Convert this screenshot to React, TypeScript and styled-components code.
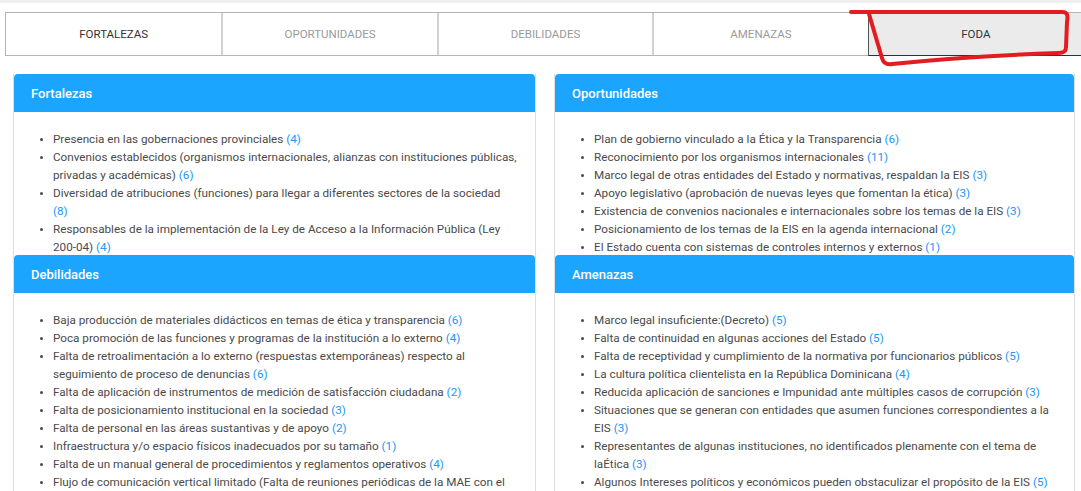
import React from "react";
import styled, { createGlobalStyle } from "styled-components";

type Item = { text: string; count: number };
type Panel = { title: string; items: Item[] };

const tabs = ["Fortalezas", "Oportunidades", "Debilidades", "Amenazas", "FODA"];

const panels: Panel[] = [
  {
    title: "Fortalezas",
    items: [
      { text: "Presencia en las gobernaciones provinciales", count: 4 },
      {
        text: "Convenios establecidos (organismos internacionales, alianzas con instituciones públicas, privadas y académicas)",
        count: 6,
      },
      { text: "Diversidad de atribuciones (funciones) para llegar a diferentes sectores de la sociedad", count: 8 },
      {
        text: "Responsables de la implementación de la Ley de Acceso a la Información Pública (Ley 200-04)",
        count: 4,
      },
    ],
  },
  {
    title: "Oportunidades",
    items: [
      { text: "Plan de gobierno vinculado a la Ética y la Transparencia", count: 6 },
      { text: "Reconocimiento por los organismos internacionales", count: 11 },
      { text: "Marco legal de otras entidades del Estado y normativas, respaldan la EIS", count: 3 },
      { text: "Apoyo legislativo (aprobación de nuevas leyes que fomentan la ética)", count: 3 },
      { text: "Existencia de convenios nacionales e internacionales sobre los temas de la EIS", count: 3 },
      { text: "Posicionamiento de los temas de la EIS en la agenda internacional", count: 2 },
      { text: "El Estado cuenta con sistemas de controles internos y externos", count: 1 },
    ],
  },
  {
    title: "Debilidades",
    items: [
      { text: "Baja producción de materiales didácticos en temas de ética y transparencia", count: 6 },
      { text: "Poca promoción de las funciones y programas de la institución a lo externo", count: 4 },
      {
        text: "Falta de retroalimentación a lo externo (respuestas extemporáneas) respecto al seguimiento de proceso de denuncias",
        count: 6,
      },
      { text: "Falta de aplicación de instrumentos de medición de satisfacción ciudadana", count: 2 },
      { text: "Falta de posicionamiento institucional en la sociedad", count: 3 },
      { text: "Falta de personal en las áreas sustantivas y de apoyo", count: 2 },
      { text: "Infraestructura y/o espacio físicos inadecuados por su tamaño", count: 1 },
      { text: "Falta de un manual general de procedimientos y reglamentos operativos", count: 4 },
      {
        text: "Flujo de comunicación vertical limitado (Falta de reuniones periódicas de la MAE con el personal)",
        count: 3,
      },
    ],
  },
  {
    title: "Amenazas",
    items: [
      { text: "Marco legal insuficiente:(Decreto)", count: 5 },
      { text: "Falta de continuidad en algunas acciones del Estado", count: 5 },
      { text: "Falta de receptividad y cumplimiento de la normativa por funcionarios públicos", count: 5 },
      { text: "La cultura política clientelista en la República Dominicana", count: 4 },
      { text: "Reducida aplicación de sanciones e Impunidad ante múltiples casos de corrupción", count: 3 },
      {
        text: "Situaciones que se generan con entidades que asumen funciones correspondientes a la EIS",
        count: 3,
      },
      {
        text: "Representantes de algunas instituciones, no identificados plenamente con el tema de laÉtica",
        count: 3,
      },
      { text: "Algunos Intereses políticos y económicos pueden obstaculizar el propósito de la EIS", count: 5 },
    ],
  },
];

const App = () => {
  return (
    <Page>
      <GlobalStyle />
      <TabBar>
        {tabs.map((t, i) => (
          <Tab key={t} $active={i === 4} $first={i === 0}>
            {t}
          </Tab>
        ))}
      </TabBar>

      <Grid>
        {panels.map((p) => (
          <Card key={p.title}>
            <CardHeader>{p.title}</CardHeader>
            <CardBody>
              <List>
                {p.items.map((it) => (
                  <li key={it.text}>
                    {it.text} <Count>({it.count})</Count>
                  </li>
                ))}
              </List>
            </CardBody>
          </Card>
        ))}
      </Grid>

      {/* hand-drawn highlight over the FODA tab */}
      <Scribble width="1081" height="80" viewBox="0 0 1081 80">
        <path
          d="M 851 12 L 1062 12 C 1068 12 1068 16 1067 22 L 1066 47 C 1066 52 1063 53 1058 53 C 1000 55 940 59 892 64 C 886 65 883 62 882 58 L 869 14"
          fill="none"
          stroke="#e41b1f"
          strokeWidth="4"
          strokeLinecap="round"
          strokeLinejoin="round"
        />
      </Scribble>
    </Page>
  );
};

const GlobalStyle = createGlobalStyle`
  html, body {
    margin: 0;
    padding: 0;
    background: #fff;
    overflow: hidden;
  }
  body {
    font-family: Roboto, "Liberation Sans", sans-serif;
  }
`;

const Page = styled.div`
  position: relative;
  width: 1081px;
  height: 491px;
  overflow: hidden;
  border-top: 3px solid #efefef;
  box-sizing: border-box;
`;

const TabBar = styled.nav`
  display: grid;
  grid-template-columns: repeat(5, 1fr);
  width: 1078px;
  height: 44px;
  margin: 9px 0 0 5px;
  border: 1px solid #b5b5b5;
  border-right: none;
  box-sizing: border-box;
`;

const Tab = styled.div<{ $active?: boolean; $first?: boolean }>`
  display: flex;
  align-items: center;
  justify-content: center;
  font-size: 11.5px;
  text-transform: uppercase;
  color: ${(p) => (p.$active || p.$first ? "#333" : "#9a9a9a")};
  background: ${(p) => (p.$active ? "#ebebeb" : "#fff")};
  border-left: ${(p) => (p.$first ? "none" : p.$active ? "1px solid #555" : "2px solid #d2d2d2")};
  border-bottom: ${(p) => (p.$active ? "1px solid #1b3552" : "none")};
  margin-bottom: ${(p) => (p.$active ? "-1px" : "0")};
`;

const Grid = styled.div`
  display: grid;
  grid-template-columns: 523px 521px;
  grid-template-rows: 181px auto;
  column-gap: 18px;
  margin: 18px 0 0 13px;
`;

const Card = styled.section`
  display: flex;
  flex-direction: column;
  overflow: hidden;
  border-left: 1px solid #dedede;
  border-right: 1px solid #dedede;
  background: #fff;
`;

const CardHeader = styled.h3`
  margin: 0;
  height: 38px;
  flex: none;
  display: flex;
  align-items: center;
  padding-left: 17px;
  background: #1ca5fe;
  border-radius: 4px 4px 0 0;
  color: #fff;
  font-size: 13px;
  font-weight: 500;
`;

const CardBody = styled.div`
  padding: 18px 17.5px 0 0;
`;

const List = styled.ul`
  margin: 0;
  padding-left: 39px;
  font-size: 11.7px;
  line-height: 18px;
  color: #4a4a4a;

  li::marker {
    font-size: 10px;
  }
`;

const Count = styled.span`
  color: #2196f3;
`;

const Scribble = styled.svg`
  position: absolute;
  top: -3px;
  left: 0;
  pointer-events: none;
`;

export default App;
